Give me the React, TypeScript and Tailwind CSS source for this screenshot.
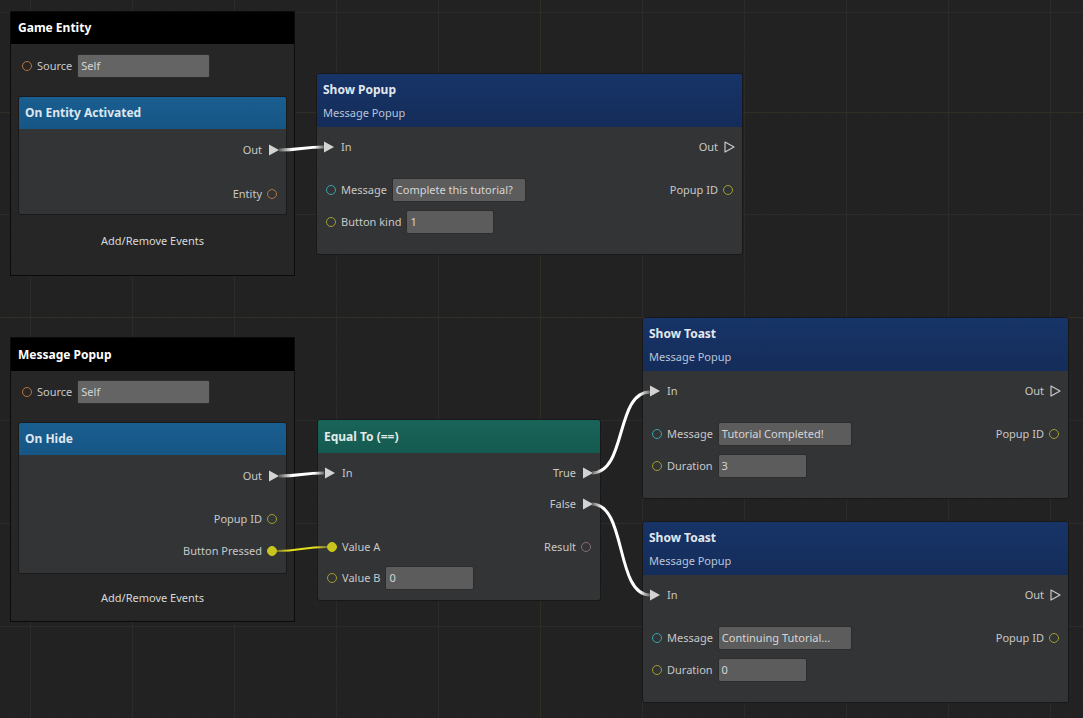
import React from "react";

type PinKind = "tri" | "hollow" | "circle";

function Tri({ hollow }: { hollow?: boolean }) {
  return hollow ? (
    <svg width="11" height="12" viewBox="0 0 11 12" className="block">
      <path d="M1 1 L10 6 L1 11 Z" fill="none" stroke="#c9c9c9" strokeWidth="1.2" strokeLinejoin="round" />
    </svg>
  ) : (
    <svg width="10" height="12" viewBox="0 0 10 12" className="block">
      <path d="M0 0.5 L10 6 L0 11.5 Z" fill="#d3d3d3" />
    </svg>
  );
}

function Dot({ cls }: { cls: string }) {
  return <span className={`block w-[10px] h-[10px] rounded-full border-[1.6px] ${cls}`} />;
}

function LeftPin({ kind, dot, label }: { kind: PinKind; dot?: string; label: string }) {
  return (
    <div className="flex items-center gap-[3px]">
      <span className={`w-[14px] h-[14px] flex items-center ${kind === "circle" ? "justify-center" : "justify-start"}`}>
        {kind === "circle" ? <Dot cls={dot || ""} /> : <Tri hollow={kind === "hollow"} />}
      </span>
      <span className="text-[11px] leading-[14px] text-[#c8c8c8] whitespace-nowrap">{label}</span>
    </div>
  );
}

function RightPin({ kind, dot, label }: { kind: PinKind; dot?: string; label: string }) {
  return (
    <div className="flex items-center gap-[3px]">
      <span className="text-[11px] leading-[14px] text-[#c8c8c8] whitespace-nowrap">{label}</span>
      <span className={`w-[14px] h-[14px] flex items-center ${kind === "circle" ? "justify-center" : "justify-end"}`}>
        {kind === "circle" ? <Dot cls={dot || ""} /> : <Tri hollow={kind === "hollow"} />}
      </span>
    </div>
  );
}

function Field({ w, value, light }: { w: string; value: string; light?: boolean }) {
  return (
    <div
      className={`ml-[5px] h-[24px] ${w} ${light ? "bg-[#646464]" : "bg-[#5c5c5c]"} border border-[#2c2c2c] rounded-[2px] px-[3px] flex items-center text-[11px] text-[#d6d6d6] overflow-hidden whitespace-nowrap`}
    >
      {value}
    </div>
  );
}

const ORANGE = "border-[#b7743d]";
const TEAL = "border-[#3aa3ad]";
const OLIVE = "border-[#a09f2c]";
const FILLED = "border-[#c8c51f] bg-[#c8c51f]";
const PINK = "border-[#8a6a74]";

function ActionNode({
  pos,
  title,
  sub,
  msg,
  second,
  secondValue,
  secondW,
}: {
  pos: string;
  title: string;
  sub: string;
  msg: string;
  second: string;
  secondValue: string;
  secondW: string;
}) {
  return (
    <div className={`absolute ${pos} w-[427px] h-[182px] border border-[#181818] rounded-[3px] overflow-hidden flex flex-col`}>
      <div className="h-[53px] shrink-0 bg-gradient-to-b from-[#173468] to-[#142c59] pl-[6px] pt-[8px]">
        <div className="text-[12px] leading-[16px] font-bold text-[#e2e7ee]">{title}</div>
        <div className="mt-[7px] text-[11px] leading-[16px] text-[#b9c5d8]">{sub}</div>
      </div>
      <div className="flex-1 bg-[#333435] pt-[10px] flex flex-col">
        <div className="h-[20px] flex items-center justify-between pl-[7px] pr-[7px]">
          <LeftPin kind="tri" label="In" />
          <RightPin kind="hollow" label="Out" />
        </div>
        <div className="mt-[21px] h-[24px] flex items-center justify-between pl-[7px] pr-[7px]">
          <div className="flex items-center">
            <LeftPin kind="circle" dot={TEAL} label="Message" />
            <Field w="w-[134px]" value={msg} />
          </div>
          <RightPin kind="circle" dot={OLIVE} label="Popup ID" />
        </div>
        <div className="mt-[8px] h-[24px] flex items-center pl-[7px] pr-[7px]">
          <LeftPin kind="circle" dot={OLIVE} label={second} />
          <Field w={secondW} value={secondValue} />
        </div>
      </div>
    </div>
  );
}

function EventNode({
  pos,
  h,
  title,
  headerH,
  srcMt,
  event,
  innerH,
  children,
  addMt,
}: {
  pos: string;
  h: string;
  title: string;
  headerH: string;
  srcMt: string;
  event: string;
  innerH: string;
  children: React.ReactNode;
  addMt: string;
}) {
  return (
    <div className={`absolute ${pos} w-[285px] ${h} bg-[#262626] border border-[#0b0b0b] flex flex-col`}>
      <div className={`${headerH} shrink-0 bg-black flex items-center pl-[7px] text-[12px] font-bold text-white`}>{title}</div>
      <div className={`${srcMt} h-[24px] flex items-center pl-[9px]`}>
        <LeftPin kind="circle" dot={ORANGE} label="Source" />
        <Field w="w-[133px]" value="Self" light />
      </div>
      <div className={`mt-[18px] mx-[7px] ${innerH} border border-[#1a1a1a] rounded-[3px] overflow-hidden flex flex-col`}>
        <div className="h-[32px] shrink-0 bg-gradient-to-b from-[#195e90] to-[#165685] flex items-center pl-[6px] text-[12px] font-bold text-[#dfe6ee]">
          {event}
        </div>
        <div className="flex-1 bg-[#333435] flex flex-col items-end pr-[7px]">{children}</div>
      </div>
      <div className={`${addMt} text-center text-[11px] leading-[16px] text-[#d8d8d8]`}>Add/Remove Events</div>
    </div>
  );
}

function Grid() {
  const vx: number[] = [];
  for (let x = 30; x < 1083; x += 102) vx.push(x);
  const hy = [12, 112, 214, 317, 420, 523, 626];
  const minorX: number[] = [];
  for (let x = 30 - 102; x < 1083; x += 20.4) if (x > 0) minorX.push(Math.round(x));
  const minorY: number[] = [];
  for (let y = 12 - 102; y < 718; y += 20.4) if (y > 0) minorY.push(Math.round(y));
  return (
    <svg className="absolute left-0 top-0" width="1083" height="718">
      {minorX.map((x) => (
        <line key={"mx" + x} x1={x + 0.5} y1={0} x2={x + 0.5} y2={718} stroke="#252525" strokeWidth="1" strokeDasharray="1 2" />
      ))}
      {minorY.map((y) => (
        <line key={"my" + y} x1={0} y1={y + 0.5} x2={1083} y2={y + 0.5} stroke="#252525" strokeWidth="1" strokeDasharray="1 2" />
      ))}
      {vx.map((x) => (
        <line key={"v" + x} x1={x + 0.5} y1={0} x2={x + 0.5} y2={718} stroke={x === 540 ? "#2f2e25" : "#2b2b2b"} strokeWidth="1" />
      ))}
      {hy.map((y) => (
        <line key={"h" + y} x1={0} y1={y + 0.5} x2={1083} y2={y + 0.5} stroke={y === 112 || y === 317 ? "#302f25" : "#2b2b2b"} strokeWidth="1" />
      ))}
    </svg>
  );
}

function Wires() {
  return (
    <svg className="absolute left-0 top-0 pointer-events-none" width="1083" height="718">
      <defs>
        <linearGradient id="g1" gradientUnits="userSpaceOnUse" x1="279" y1="0" x2="324" y2="0">
          <stop offset="0" stopColor="#5e5e5e" />
          <stop offset="0.3" stopColor="#ffffff" />
          <stop offset="0.78" stopColor="#ffffff" />
          <stop offset="1" stopColor="#6a6a6a" />
        </linearGradient>
        <linearGradient id="g2" gradientUnits="userSpaceOnUse" x1="592" y1="0" x2="650" y2="0">
          <stop offset="0" stopColor="#6a6a6a" />
          <stop offset="0.18" stopColor="#ffffff" />
          <stop offset="0.82" stopColor="#ffffff" />
          <stop offset="1" stopColor="#6a6a6a" />
        </linearGradient>
        <linearGradient id="gy" gradientUnits="userSpaceOnUse" x1="276" y1="0" x2="327" y2="0">
          <stop offset="0" stopColor="#6d6c2e" />
          <stop offset="0.25" stopColor="#e2de1e" />
          <stop offset="0.8" stopColor="#e2de1e" />
          <stop offset="1" stopColor="#77762f" />
        </linearGradient>
      </defs>
      <path d="M279 150 C 301 150, 302 147, 324 147" fill="none" stroke="url(#g1)" strokeWidth="3" />
      <path d="M279 476 C 301 476, 302 473, 324 473" fill="none" stroke="url(#g1)" strokeWidth="3" />
      <path d="M277 551 C 301 551, 302 547, 327 547" fill="none" stroke="url(#gy)" strokeWidth="2" />
      <path d="M592 473 C 627 473, 615 392, 650 392" fill="none" stroke="url(#g2)" strokeWidth="3" />
      <path d="M592 504 C 627 504, 615 595, 650 595" fill="none" stroke="url(#g2)" strokeWidth="3" />
    </svg>
  );
}

export default function App() {
  return (
    <div className="relative w-[1083px] h-[718px] overflow-hidden bg-[#222222] font-['Noto_Sans',sans-serif]">
      <Grid />

      <EventNode
        pos="left-[10px] top-[11px]"
        h="h-[265px]"
        title="Game Entity"
        headerH="h-[32px]"
        srcMt="mt-[10px]"
        event="On Entity Activated"
        innerH="h-[119px]"
        addMt="mt-[18px]"
      >
        <div className="mt-[11px] h-[20px] flex items-center">
          <RightPin kind="tri" label="Out" />
        </div>
        <div className="mt-[24px] h-[20px] flex items-center">
          <RightPin kind="circle" dot={ORANGE} label="Entity" />
        </div>
      </EventNode>

      <EventNode
        pos="left-[10px] top-[337px]"
        h="h-[285px]"
        title="Message Popup"
        headerH="h-[33px]"
        srcMt="mt-[9px]"
        event="On Hide"
        innerH="h-[152px]"
        addMt="mt-[16px]"
      >
        <div className="mt-[11px] h-[20px] flex items-center">
          <RightPin kind="tri" label="Out" />
        </div>
        <div className="mt-[23px] h-[20px] flex items-center">
          <RightPin kind="circle" dot={OLIVE} label="Popup ID" />
        </div>
        <div className="mt-[12px] h-[20px] flex items-center">
          <RightPin kind="circle" dot={FILLED} label="Button Pressed" />
        </div>
      </EventNode>

      <ActionNode
        pos="left-[316px] top-[73px]"
        title="Show Popup"
        sub="Message Popup"
        msg="Complete this tutorial?"
        second="Button kind"
        secondValue="1"
        secondW="w-[88px]"
      />

      <div className="absolute left-[317px] top-[419px] w-[284px] h-[182px] border border-[#181818] rounded-[3px] overflow-hidden flex flex-col">
        <div className="h-[33px] shrink-0 bg-gradient-to-b from-[#196459] to-[#155a50] flex items-center pl-[6px] text-[12px] font-bold text-[#e2ebe9]">
          Equal To (==)
        </div>
        <div className="flex-1 bg-[#333435] pt-[10px] flex flex-col px-[7px]">
          <div className="h-[20px] flex items-center justify-between">
            <LeftPin kind="tri" label="In" />
            <RightPin kind="tri" label="True" />
          </div>
          <div className="mt-[11px] h-[20px] flex items-center justify-end">
            <RightPin kind="tri" label="False" />
          </div>
          <div className="mt-[23px] h-[20px] flex items-center justify-between">
            <LeftPin kind="circle" dot={FILLED} label="Value A" />
            <RightPin kind="circle" dot={PINK} label="Result" />
          </div>
          <div className="mt-[9px] h-[24px] flex items-center">
            <LeftPin kind="circle" dot={OLIVE} label="Value B" />
            <Field w="w-[89px]" value="0" />
          </div>
        </div>
      </div>

      <ActionNode
        pos="left-[642px] top-[317px]"
        title="Show Toast"
        sub="Message Popup"
        msg="Tutorial Completed!"
        second="Duration"
        secondValue="3"
        secondW="w-[89px]"
      />

      <ActionNode
        pos="left-[642px] top-[521px]"
        title="Show Toast"
        sub="Message Popup"
        msg="Continuing Tutorial..."
        second="Duration"
        secondValue="0"
        secondW="w-[89px]"
      />

      <Wires />
    </div>
  );
}
